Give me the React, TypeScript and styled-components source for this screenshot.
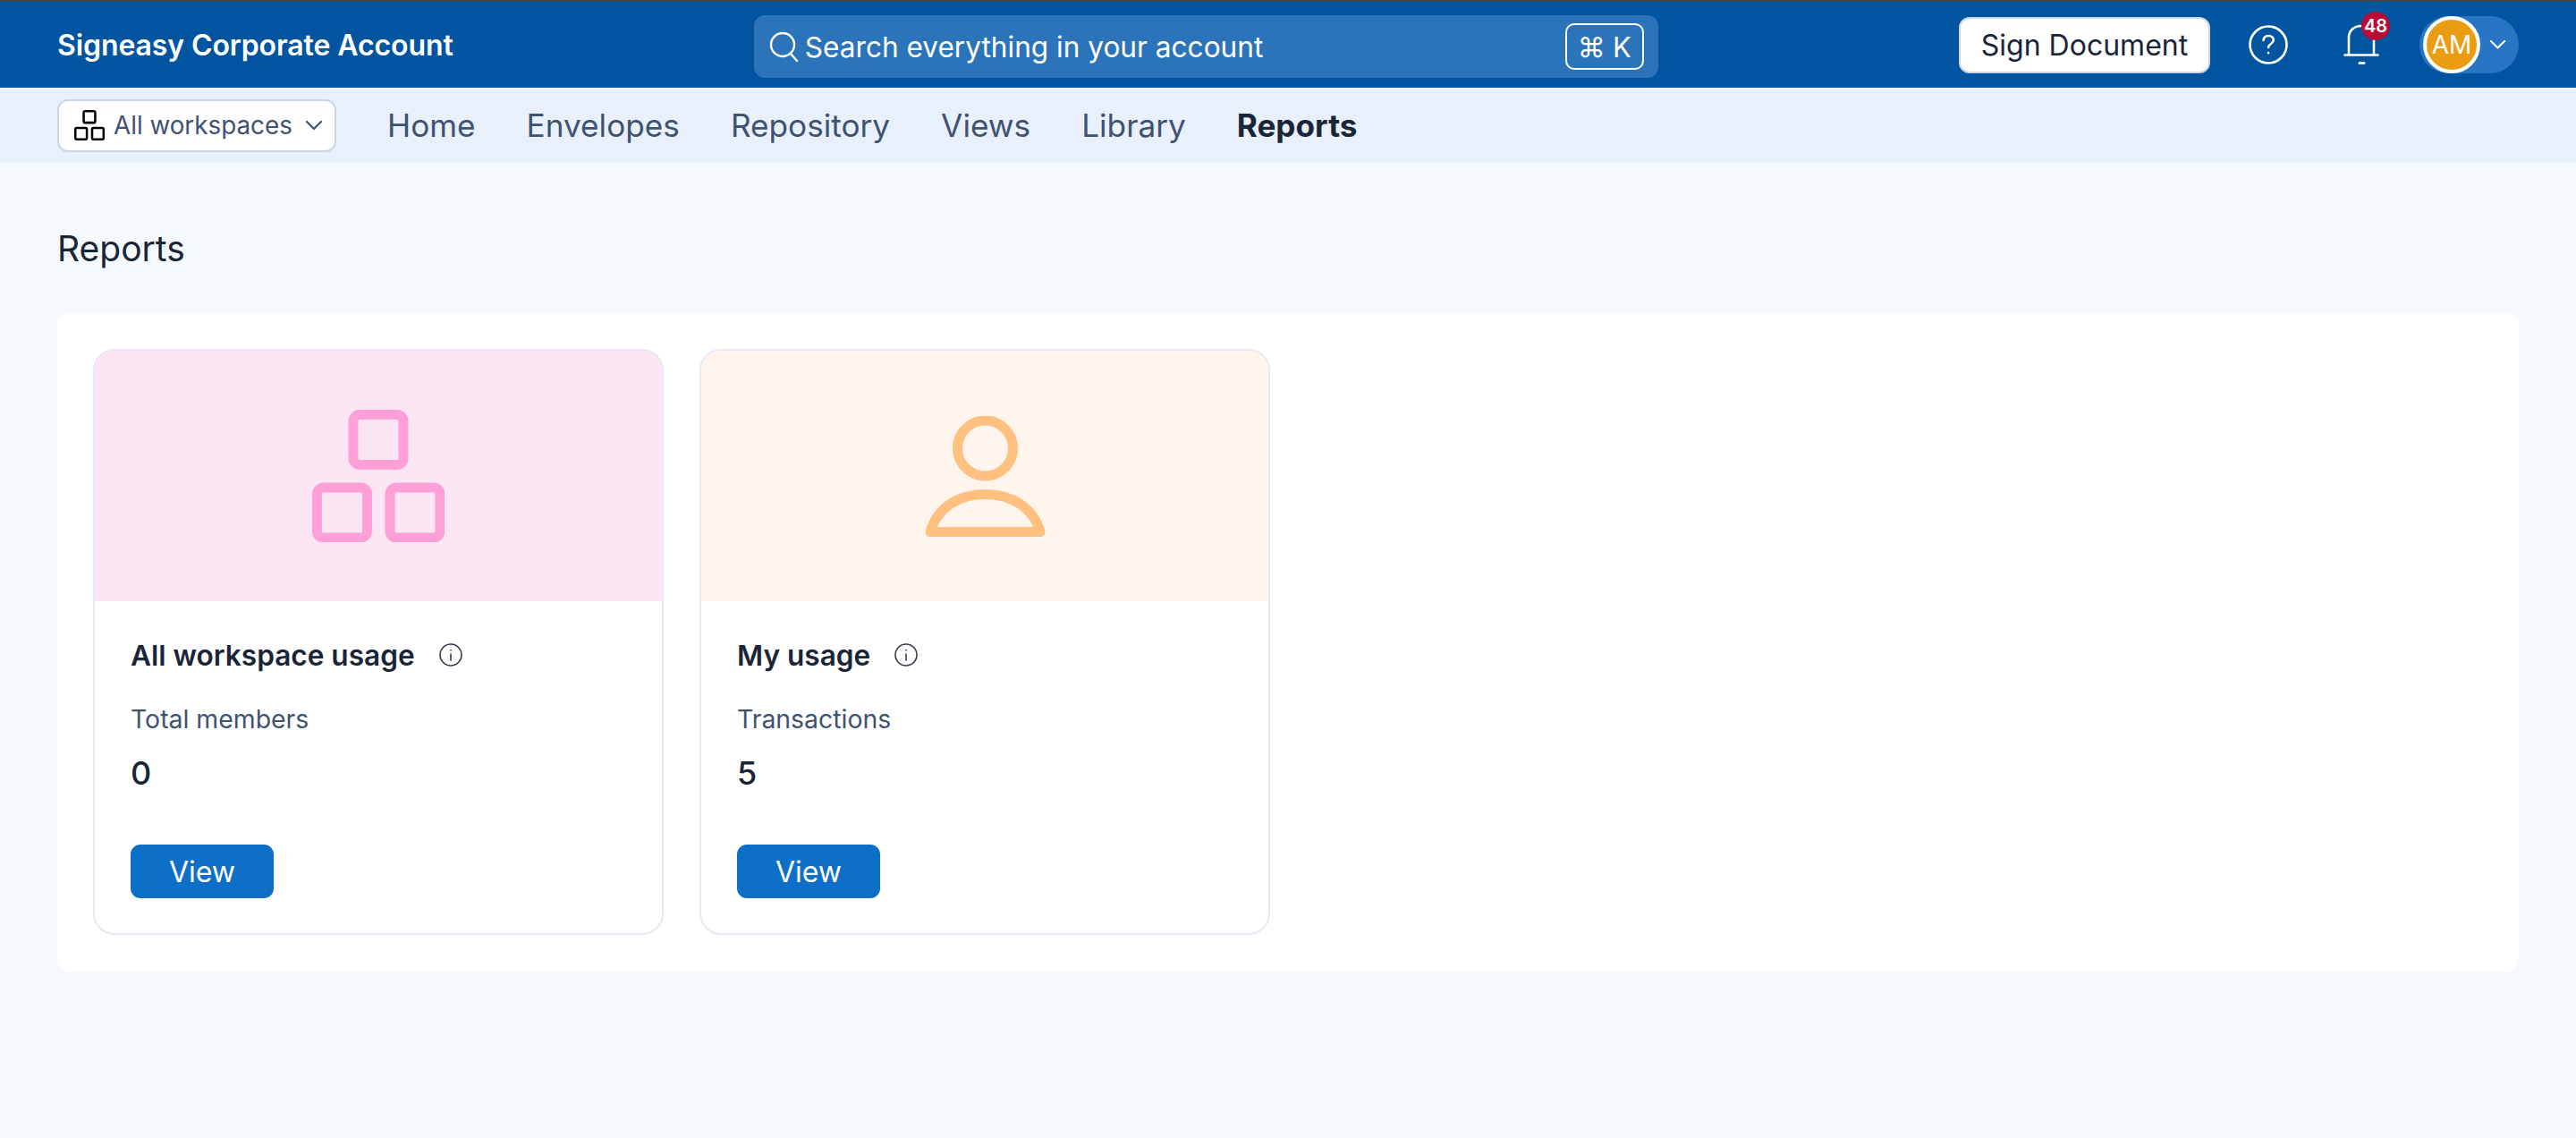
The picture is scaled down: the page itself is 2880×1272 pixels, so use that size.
import React from "react";
import styled, { createGlobalStyle } from "styled-components";

const GlobalStyle = createGlobalStyle`
  html, body {
    margin: 0;
    padding: 0;
    background: #f5f8fd;
    font-family: Inter, "Liberation Sans", sans-serif;
  }
  * {
    box-sizing: border-box;
  }
`;

const Page = styled.div`
  min-height: 1272px;
  background: #f5f8fd;
`;
const TopBar = styled.header`
  height: 98px;
  border-top: 2px solid #3d4650;
  background: #01549f;
  padding: 0 64px;
  display: flex;
  align-items: center;
  justify-content: space-between;
  color: #fff;
`;
const AccountName = styled.div`
  font-size: 32px;
  font-weight: 600;
  letter-spacing: -0.1px;
`;
const SearchBox = styled.div`
  width: 1011px;
  height: 70px;
  margin-top: 4px;
  background: #2b74ba;
  border-radius: 12px;
  padding: 0 16px 0 15px;
  display: flex;
  align-items: center;
  gap: 6px;
  font-size: 31.6px;
  color: #fff;
`;
const SearchLabel = styled.span`
  flex: 1;
`;
const Kbd = styled.kbd`
  width: 88px;
  height: 52px;
  border: 2px solid #fff;
  border-radius: 10px;
  display: flex;
  align-items: center;
  justify-content: center;
  gap: 8px;
  font-family: Inter, "DejaVu Sans", sans-serif;
  font-size: 31px;
`;
const RightGroup = styled.div`
  display: flex;
  align-items: center;
`;
const SignButton = styled.button`
  width: 281px;
  height: 63px;
  margin-right: 43px;
  background: #fff;
  border: 2px solid #c9d6e6;
  border-radius: 12px;
  color: #1a2638;
  font-family: inherit;
  font-size: 32px;
`;
const HelpIcon = styled.svg`
  display: block;
  margin-right: 62px;
`;
const BellWrap = styled.div`
  position: relative;
  width: 40px;
  height: 46px;
  margin-right: 45px;
`;
const Badge = styled.span`
  position: absolute;
  left: 20px;
  top: -14px;
  width: 32px;
  height: 32px;
  border-radius: 50%;
  background: #ba0a36;
  color: #fff;
  font-size: 20px;
  font-weight: 600;
  display: flex;
  align-items: center;
  justify-content: center;
`;
const UserPill = styled.div`
  width: 111px;
  height: 64px;
  border-radius: 32px;
  background: #2775c4;
  padding-left: 4px;
  display: flex;
  align-items: center;
  gap: 10px;
`;
const Avatar = styled.div`
  width: 64px;
  height: 64px;
  border: 4px solid #fff;
  border-radius: 50%;
  background: #ea9c12;
  color: #fff;
  font-size: 28px;
  display: flex;
  align-items: center;
  justify-content: center;
`;
const SubNav = styled.nav`
  height: 84px;
  background: #e8f0fb;
  padding: 0 64px;
  display: flex;
  align-items: center;
`;
const WorkspaceSelect = styled.div`
  width: 312px;
  height: 59px;
  margin-right: 57px;
  background: #fff;
  border: 2px solid #c9d6e6;
  border-radius: 12px;
  padding-left: 17px;
  display: flex;
  align-items: center;
  gap: 10px;
  color: #3f5272;
  font-size: 27.8px;
`;
const WorkspaceLabel = styled.span`
  margin-right: 4px;
`;
const NavLinks = styled.div`
  display: flex;
  gap: 57px;
`;
const NavLink = styled.a<{ $active?: boolean }>`
  font-size: 35.2px;
  font-weight: ${(p) => (p.$active ? 700 : 400)};
  color: ${(p) => (p.$active ? "#1a2638" : "#3f5272")};
`;
const Main = styled.main`
  padding: 72px 64px 0;
`;
const PageTitle = styled.h1`
  margin: 0 0 48px;
  font-size: 39px;
  line-height: 48px;
  font-weight: 400;
  color: #1a2638;
`;
const Panel = styled.section`
  background: #fff;
  border-radius: 14px;
  padding: 40px 40px 41px;
  display: flex;
  gap: 40px;
`;
const Card = styled.article`
  width: 638px;
  height: 655px;
  border: 2px solid #e4e9f2;
  border-radius: 24px;
  overflow: hidden;
`;
const Hero = styled.div<{ $bg: string }>`
  height: 280px;
  background: ${(p) => p.$bg};
  display: flex;
  align-items: center;
  justify-content: center;
`;
const CardBody = styled.div`
  padding: 40px 40px;
`;
const CardTitleRow = styled.div`
  height: 40px;
  display: flex;
  align-items: center;
  gap: 27px;
`;
const CardTitle = styled.h2`
  margin: 0;
  font-size: 31.6px;
  font-weight: 600;
  color: #1a2638;
`;
const StatLabel = styled.div`
  margin-top: 34px;
  font-size: 28.4px;
  line-height: 36px;
  color: #3f5272;
`;
const StatValue = styled.div`
  margin-top: 20px;
  font-size: 36px;
  line-height: 44px;
  font-weight: 500;
  color: #1a2638;
`;
const ViewButton = styled.button`
  display: block;
  width: 160px;
  height: 60px;
  margin-top: 58px;
  background: #0d6fc5;
  border: none;
  border-radius: 11px;
  color: #fff;
  font-family: inherit;
  font-size: 32px;
`;

const SearchIcon = () => (
  <svg width="36" height="40" viewBox="0 0 36 40" fill="none" stroke="#fff" strokeWidth="2.4" strokeLinecap="round">
    <circle cx="17" cy="18" r="13" />
    <path d="M26 28l7 8" />
  </svg>
);

const Chevron: React.FC<{ color: string; width: number }> = ({ color, width }) => (
  <svg width={width} height={width * 0.6} viewBox="0 0 20 12" fill="none" stroke={color} strokeWidth="2.2" strokeLinecap="round" strokeLinejoin="round">
    <path d="M2 2l8 8 8-8" />
  </svg>
);

const BlocksIcon: React.FC<{ size: number; color: string }> = ({ size, color }) => (
  <svg width={size} height={size} viewBox="0 0 148 148" fill="none" stroke={color} strokeWidth="11">
    <rect x="46" y="5.500" width="56" height="56" rx="7" />
    <rect x="5.500" y="87" width="56" height="56" rx="7" />
    <rect x="87" y="87" width="56" height="56" rx="7" />
  </svg>
);

const PersonIcon = () => (
  <svg width="135" height="135" viewBox="0 0 135 135" fill="none" stroke="#ffc080" strokeWidth="11" strokeLinejoin="round">
    <circle cx="67.5" cy="36" r="31" />
    <path d="M6 129.5C14 102 38 87.500 67.500 87.500S121 102 129 129.500Z" />
  </svg>
);

const InfoIcon = () => (
  <svg width="26" height="26" viewBox="0 0 26 26" fill="none" stroke="#333c48" strokeWidth="1.6" strokeLinecap="round">
    <circle cx="13" cy="13" r="12" />
    <path d="M13 12v7M13 7.500v.5" />
  </svg>
);

const navItems = ["Home", "Envelopes", "Repository", "Views", "Library"];

const App: React.FC = () => {
  return (
    <Page>
      <GlobalStyle />
      <TopBar>
        <AccountName>Signeasy Corporate Account</AccountName>
        <SearchBox>
          <SearchIcon />
          <SearchLabel>Search everything in your account</SearchLabel>
          <Kbd>
            <span>⌘</span>
            <span>K</span>
          </Kbd>
        </SearchBox>
        <RightGroup>
          <SignButton>Sign Document</SignButton>
          <HelpIcon width="44" height="44" viewBox="0 0 44 44" fill="none" stroke="#fff" strokeWidth="2.6" strokeLinecap="round">
            <circle cx="22" cy="22" r="20.500" />
            <path d="M16.500 17c.5-3.500 3-5 5.700-5 3.200 0 5.600 2 5.600 4.800 0 4-5.700 4.300-5.700 8.200" />
            <path d="M22.100 31v.2" />
          </HelpIcon>
          <BellWrap>
            <svg width="40" height="46" viewBox="0 0 40 46" fill="none" stroke="#fff" strokeWidth="2.6" strokeLinecap="round" strokeLinejoin="round">
              <path d="M6 34V15C6 7 12 2 20 2s14 5 14 13v19" />
              <path d="M1.500 34.500h37" />
              <path d="M18 43.500h5" strokeWidth="3" />
            </svg>
            <Badge>48</Badge>
          </BellWrap>
          <UserPill>
            <Avatar>AM</Avatar>
            <Chevron color="#fff" width={19} />
          </UserPill>
        </RightGroup>
      </TopBar>
      <SubNav>
        <WorkspaceSelect>
          <BlocksIcon size={34} color="#000" />
          <WorkspaceLabel>All workspaces</WorkspaceLabel>
          <Chevron color="#3f5272" width={20} />
        </WorkspaceSelect>
        <NavLinks>
          {navItems.map((item) => (
            <NavLink key={item}>{item}</NavLink>
          ))}
          <NavLink $active>Reports</NavLink>
        </NavLinks>
      </SubNav>
      <Main>
        <PageTitle>Reports</PageTitle>
        <Panel>
          <Card>
            <Hero $bg="#fce6f3">
              <BlocksIcon size={148} color="#ff9fd8" />
            </Hero>
            <CardBody>
              <CardTitleRow>
                <CardTitle>All workspace usage</CardTitle>
                <InfoIcon />
              </CardTitleRow>
              <StatLabel>Total members</StatLabel>
              <StatValue>0</StatValue>
              <ViewButton>View</ViewButton>
            </CardBody>
          </Card>
          <Card>
            <Hero $bg="#fff5ec">
              <PersonIcon />
            </Hero>
            <CardBody>
              <CardTitleRow>
                <CardTitle>My usage</CardTitle>
                <InfoIcon />
              </CardTitleRow>
              <StatLabel>Transactions</StatLabel>
              <StatValue>5</StatValue>
              <ViewButton>View</ViewButton>
            </CardBody>
          </Card>
        </Panel>
      </Main>
    </Page>
  );
};

export default App;
